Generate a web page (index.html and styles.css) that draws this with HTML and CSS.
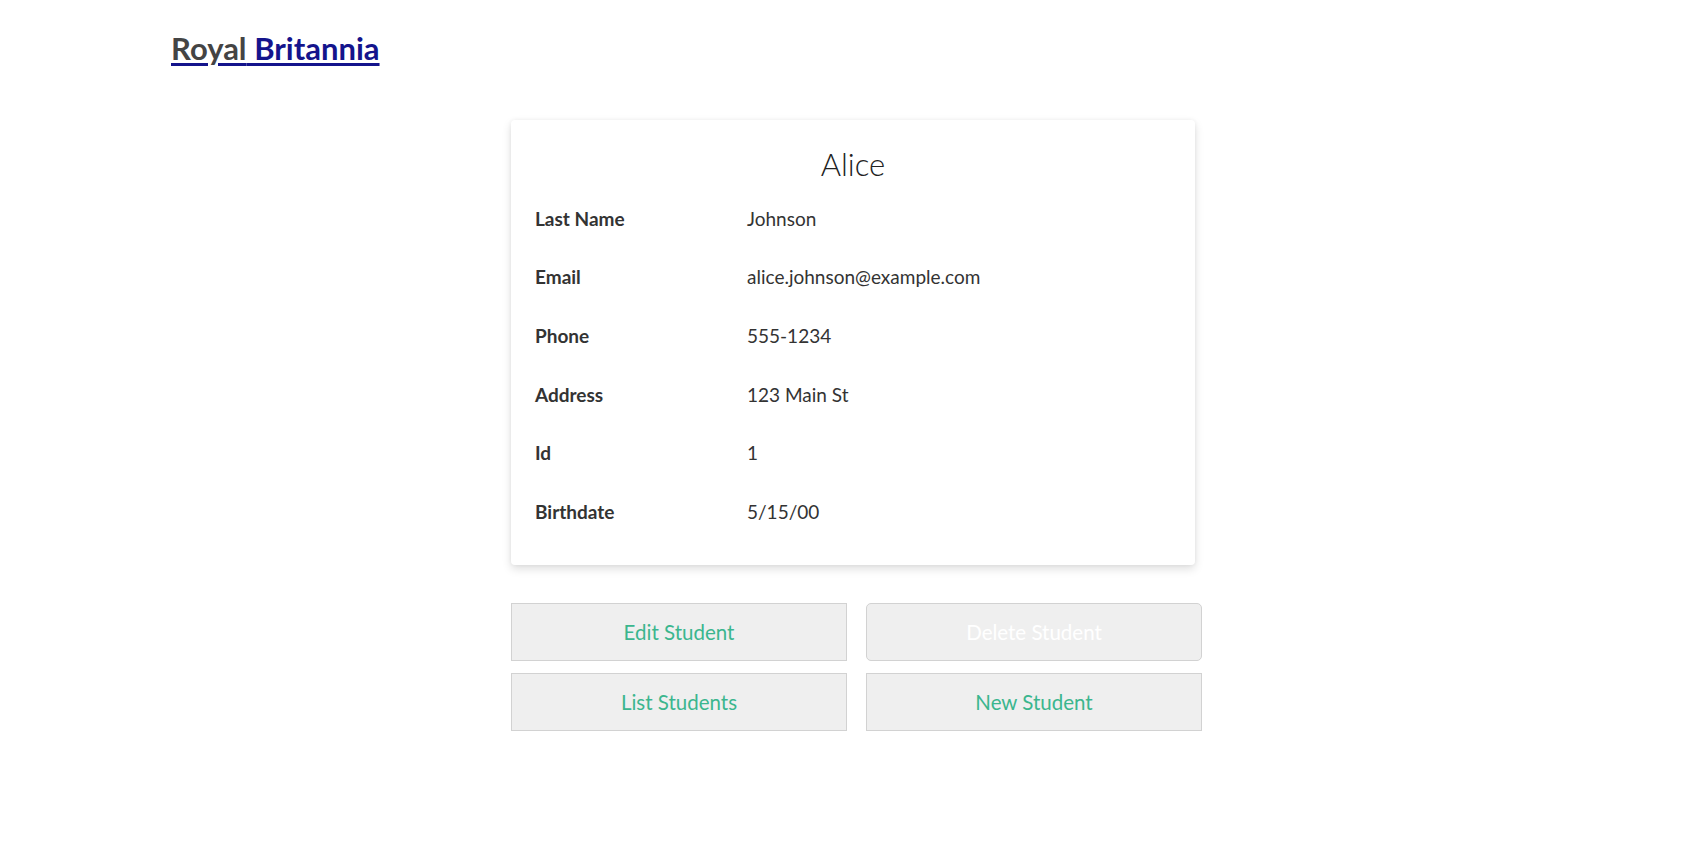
FILE: index.html
```html
<!DOCTYPE html>
<html>
<head>
<meta charset="utf-8">
<title>Royal Britannia</title>
<link rel="stylesheet" href="styles.css">
</head>
<body>
<header class="site-header">
  <a class="brand" href="#"><span class="brand-first">Royal</span> Britannia</a>
</header>
<main class="main">
  <section class="card">
    <h2 class="card-title">Alice</h2>
    <div class="details">
      <div class="label">Last Name</div><div class="value">Johnson</div>
      <div class="label">Email</div><div class="value">alice.johnson@example.com</div>
      <div class="label">Phone</div><div class="value">555-1234</div>
      <div class="label">Address</div><div class="value">123 Main St</div>
      <div class="label">Id</div><div class="value">1</div>
      <div class="label">Birthdate</div><div class="value">5/15/00</div>
    </div>
  </section>
  <div class="actions">
    <button class="btn">Edit Student</button>
    <button class="btn btn-disabled">Delete Student</button>
    <button class="btn">List Students</button>
    <button class="btn">New Student</button>
  </div>
</main>
</body>
</html>
```
FILE: styles.css
```css
html, body {
  margin: 0;
  padding: 0;
  background: #ffffff;
}
body {
  font-family: Lato, "Liberation Sans", sans-serif;
  color: #333333;
}
.site-header {
  padding: 30px 0 0 171px;
  height: 50px;
}
.brand {
  font-size: 31px;
  font-weight: 700;
  color: #14148c;
  text-decoration: underline;
  text-underline-offset: 3px;
  line-height: 36px;
}
.brand-first {
  color: #444444;
}
.main {
  padding: 40px 0 0 511px;
}
.card {
  width: 684px;
  box-sizing: border-box;
  padding: 24px 24px 24px 24px;
  background: #fff;
  border-radius: 4px;
  box-shadow: 0 4px 10px rgba(0, 0, 0, 0.13), 0 0 4px rgba(0, 0, 0, 0.05);
}
.card-title {
  margin: 0 0 5px 0;
  text-align: center;
  font-family: Lato, "Liberation Sans", sans-serif;
  font-weight: 300;
  font-size: 31px;
  line-height: 40px;
  color: #222;
}
.details {
  display: grid;
  grid-template-columns: 1fr 2fr;
  grid-auto-rows: 58.6px;
  align-items: center;
  font-size: 19px;
}
.label {
  font-weight: 700;
  color: #333;
}
.value {
  font-weight: 400;
  color: #333;
}
.actions {
  margin-top: 38px;
  display: grid;
  grid-template-columns: 336px 336px;
  column-gap: 19px;
  row-gap: 12px;
}
.btn {
  height: 58px;
  background: #efefef;
  border: 1px solid #d2d2d2;
  border-radius: 0;
  font-family: Lato, "Liberation Sans", sans-serif;
  font-size: 20.5px;
  color: #3bb68e;
  cursor: pointer;
}
.btn-disabled {
  color: #ffffff;
  border-radius: 5px;
}
```
